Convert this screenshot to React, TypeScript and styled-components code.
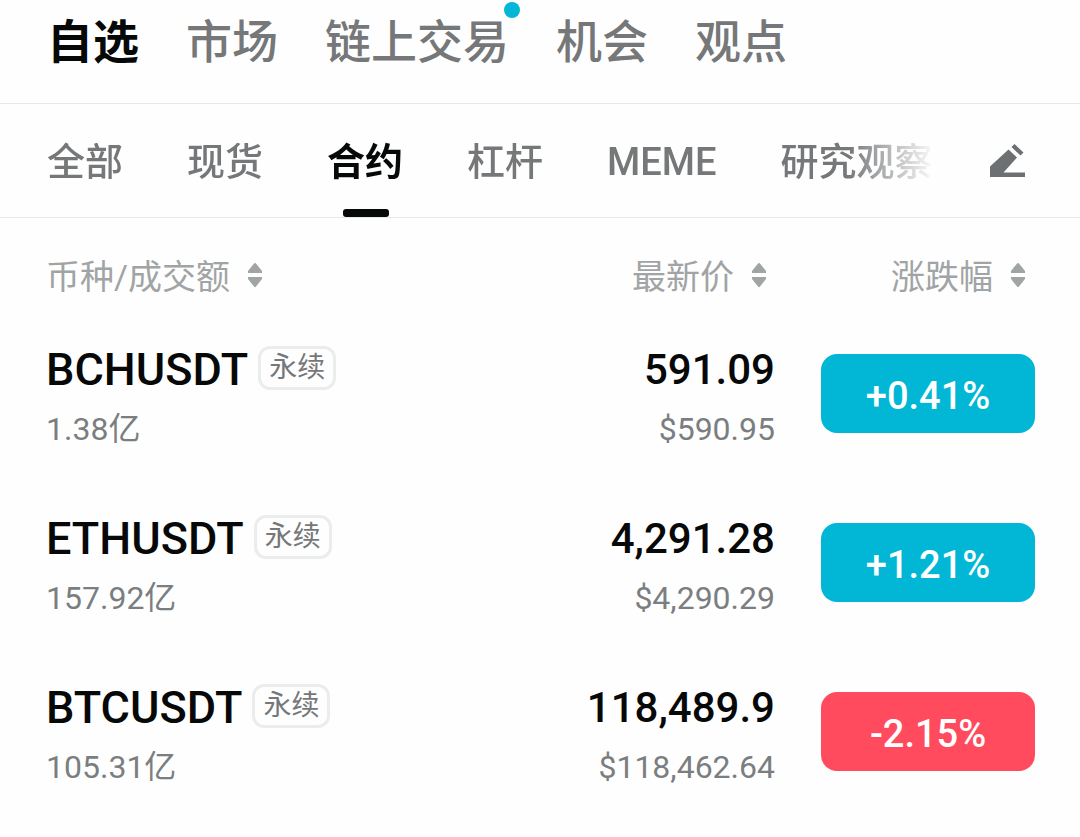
import React, { useState } from "react";
import styled, { createGlobalStyle } from "styled-components";

const GlobalStyle = createGlobalStyle`
  *, *::before, *::after { box-sizing: border-box; }
  body {
    margin: 0;
    background: #fefefe;
    color: #070808;
    font-family: Roboto, "Noto Sans CJK SC", sans-serif;
  }
  button {
    margin: 0;
    padding: 0;
    border: 0;
    background: none;
    color: inherit;
    font: inherit;
    cursor: pointer;
  }
`;

const Page = styled.main`
  width: 100%;
`;

const MainNav = styled.nav`
  display: flex;
  gap: 47px;
  padding: 12px 47px 31px;
  border-bottom: 1px solid #e8e9e9;
`;

const MainLink = styled.a<{ $active?: boolean }>`
  position: relative;
  flex: none;
  font-size: 46px;
  line-height: 60px;
  font-weight: ${(p) => (p.$active ? 700 : 500)};
  color: ${(p) => (p.$active ? "#070808" : "#757779")};
  text-decoration: none;
`;

const Dot = styled.span`
  position: absolute;
  top: -10px;
  right: -11px;
  width: 16px;
  height: 16px;
  border-radius: 50%;
  background: #05b7d6;
`;

const SubBar = styled.div`
  display: flex;
  align-items: center;
  justify-content: space-between;
  padding: 0 54px 0 47px;
  border-bottom: 1px solid #e8e9e9;
`;

const SubTabs = styled.div`
  display: flex;
  flex: 1;
  min-width: 0;
  gap: 64px;
  overflow: hidden;
  mask-image: linear-gradient(to right, #000 calc(100% - 88px), transparent);
`;

const SubTab = styled.button<{ $active: boolean }>`
  position: relative;
  flex: none;
  height: 113px;
  padding-top: 3px;
  font-size: 38px;
  line-height: 48px;
  font-weight: ${(p) => (p.$active ? 700 : 500)};
  color: ${(p) => (p.$active ? "#070808" : "#757779")};

  &::after {
    content: "";
    display: ${(p) => (p.$active ? "block" : "none")};
    position: absolute;
    bottom: 0;
    left: 50%;
    width: 46px;
    height: 8px;
    margin-left: -22px;
    border-radius: 3px;
    background: #070808;
  }
`;

const EditButton = styled.button`
  flex: none;
  margin-left: 54px;
  line-height: 0;
  color: #6c7073;
`;

const Table = styled.table`
  width: 100%;
  border-collapse: collapse;
`;

const HeadCell = styled.th<{ $align: "left" | "right"; $end?: boolean }>`
  padding: 35px ${(p) => (p.$end ? 46 : 0)}px 12px 46px;
  text-align: ${(p) => p.$align};
  font-weight: 400;
`;

const SortButton = styled.button`
  display: inline-flex;
  align-items: center;
  gap: 17px;
  padding-right: 8px;
  vertical-align: top;
  font-size: 34px;
  color: #a1a4a4;
`;

const SortLabel = styled.span`
  padding-top: 4px;
  line-height: 40px;
`;

const Cell = styled.td<{ $align: "left" | "right" }>`
  padding: 37px 0 27px 46px;
  text-align: ${(p) => p.$align};
`;

const ChangeCell = styled.td`
  width: 305px;
  padding: 0 45px 0 46px;
`;

const Pair = styled.div`
  display: flex;
  align-items: center;
  gap: 10px;
  height: 48px;
`;

const Ticker = styled.span`
  font-size: 45px;
  line-height: 48px;
  font-weight: 500;
`;

const Tag = styled.span`
  height: 44px;
  margin-bottom: 4px;
  padding: 0 8px;
  border: 3px solid #ebecec;
  border-radius: 12px;
  font-size: 28px;
  line-height: 38px;
  color: #75787a;
`;

const Price = styled.div`
  font-size: 42px;
  line-height: 48px;
  font-weight: 500;
`;

const Minor = styled.div`
  margin-top: 13px;
  font-size: 32px;
  line-height: 44px;
  color: #7b7e80;
`;

const Change = styled.button<{ $down: boolean }>`
  display: block;
  width: 100%;
  height: 79px;
  padding-top: 4px;
  border-radius: 16px;
  background: ${(p) => (p.$down ? "#ff4b5d" : "#02b7d5")};
  color: #fff;
  font-size: 38px;
  line-height: 48px;
  font-weight: 500;
`;

const SortIcon = () => (
  <svg width="16" height="26" viewBox="0 0 16 26" fill="currentColor" aria-hidden="true">
    <path d="M7 1.5Q8 .5 9 1.5L15 9V11H1V9Z" />
    <path d="M7 24.5Q8 25.5 9 24.5L15 17V15H1V17Z" />
  </svg>
);

const PenIcon = () => (
  <svg width="36" height="34" viewBox="0 0 36 34" fill="currentColor" aria-hidden="true">
    <path d="M0 33V22.500L18.500 5.500L27 13.500L13.500 28.500H35V33Z" />
    <path d="M21.500 3L24.500 0L33.500 8.500L30.500 11.500Z" />
  </svg>
);

const sections = ["自选", "市场", "链上交易", "机会", "观点"];
const groups = ["全部", "现货", "合约", "杠杆", "MEME", "研究观察"];
const columns = ["币种/成交额", "最新价", "涨跌幅"];
const rows = [
  { pair: "BCHUSDT", volume: "1.38亿", price: "591.09", usd: "$590.95", change: "+0.41%" },
  { pair: "ETHUSDT", volume: "157.92亿", price: "4,291.28", usd: "$4,290.29", change: "+1.21%" },
  { pair: "BTCUSDT", volume: "105.31亿", price: "118,489.9", usd: "$118,462.64", change: "-2.15%" },
];

export default function App() {
  const [group, setGroup] = useState("合约");

  return (
    <Page lang="zh-CN">
      <GlobalStyle />
      <MainNav>
        {sections.map((name, i) => (
          <MainLink key={name} href="#" $active={i === 0}>
            {name}
            {name === "链上交易" && <Dot />}
          </MainLink>
        ))}
      </MainNav>
      <SubBar>
        <SubTabs role="tablist">
          {groups.map((name) => (
            <SubTab
              key={name}
              type="button"
              role="tab"
              aria-selected={name === group}
              $active={name === group}
              onClick={() => setGroup(name)}
            >
              {name}
            </SubTab>
          ))}
        </SubTabs>
        <EditButton type="button" aria-label="编辑">
          <PenIcon />
        </EditButton>
      </SubBar>
      <Table>
        <thead>
          <tr>
            {columns.map((name, i) => (
              <HeadCell key={name} scope="col" $align={i === 0 ? "left" : "right"} $end={i === 2}>
                <SortButton type="button">
                  <SortLabel>{name}</SortLabel>
                  <SortIcon />
                </SortButton>
              </HeadCell>
            ))}
          </tr>
        </thead>
        <tbody>
          {rows.map((row) => (
            <tr key={row.pair}>
              <Cell $align="left">
                <Pair>
                  <Ticker>{row.pair}</Ticker>
                  <Tag>永续</Tag>
                </Pair>
                <Minor>{row.volume}</Minor>
              </Cell>
              <Cell $align="right">
                <Price>{row.price}</Price>
                <Minor>{row.usd}</Minor>
              </Cell>
              <ChangeCell>
                <Change type="button" $down={row.change.startsWith("-")}>
                  {row.change}
                </Change>
              </ChangeCell>
            </tr>
          ))}
        </tbody>
      </Table>
    </Page>
  );
}
